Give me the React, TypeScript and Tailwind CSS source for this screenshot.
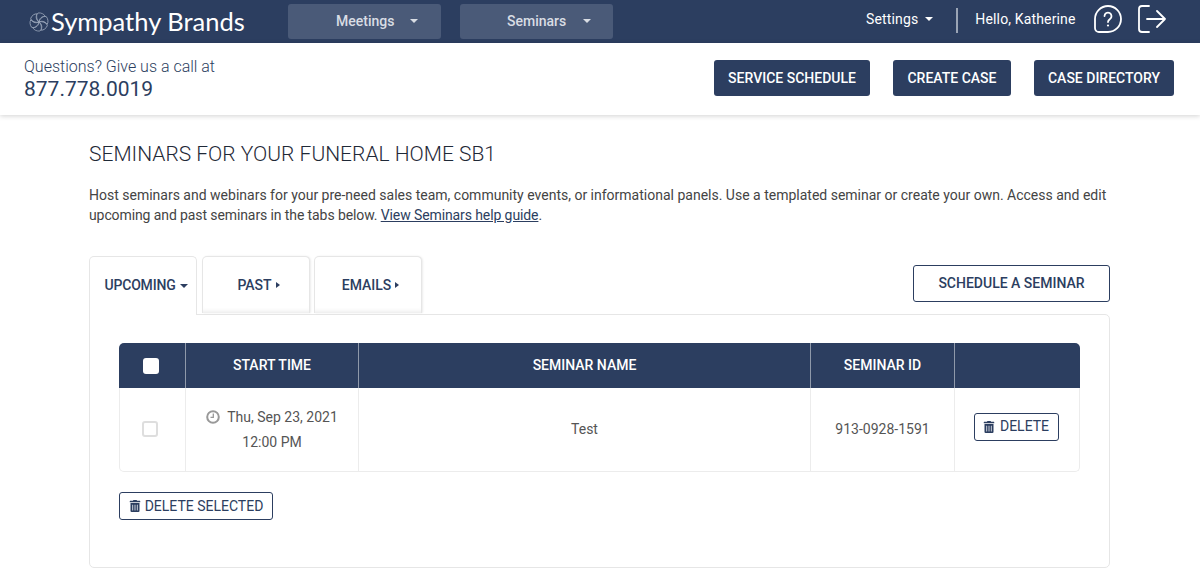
import React from "react";
import { FaTrashAlt } from "react-icons/fa";

function Caret({ right }: { right?: boolean }) {
  if (right) {
    return <span className="inline-block w-0 h-0 border-y-[3.5px] border-y-transparent border-l-[4px] border-l-current" />;
  }
  return <span className="inline-block w-0 h-0 border-x-[4px] border-x-transparent border-t-[4px] border-t-current" />;
}

function LogoMark() {
  const angles = [0, 60, 120, 180, 240, 300];
  return (
    <svg width="20" height="20" viewBox="0 0 20 20" fill="none" stroke="#9aa6ba" strokeWidth="0.8">
      {angles.map((a) => (
        <g key={a} transform={`rotate(${a} 10 10)`}>
          <path d="M10 10C7 8 6 4 9 1C12 .5 15 2 16 4C14 5 11 6 10 10Z" />
        </g>
      ))}
    </svg>
  );
}

function ClockIcon() {
  return (
    <svg width="14" height="14" viewBox="0 0 14 14" fill="none" stroke="#999" strokeWidth="2">
      <circle cx="7" cy="7" r="5.8" />
      <path d="M7.3 3.5V7.3H4.5" strokeWidth="1.3" />
    </svg>
  );
}

function App() {
  return (
    <div className="w-[1200px] h-[576px] overflow-hidden bg-white font-['Roboto',sans-serif] text-[#2c3e60]">
      <div className="h-[43px] bg-[#2c3e60] flex items-center text-white">
        <div className="ml-[29px] w-[259px] flex items-center">
          <LogoMark />
          <span className="font-['Lato',sans-serif] text-[25.5px] leading-none ml-[2px] whitespace-nowrap">Sympathy Brands</span>
        </div>
        <div className="w-[153px] h-[35px] -mt-[1px] rounded-[3px] bg-[#4a5a78] flex items-center pl-[48px] text-[14px] font-medium text-[#d9dde4]">
          Meetings
          <span className="ml-[16px] flex"><Caret /></span>
        </div>
        <div className="w-[153px] h-[35px] -mt-[1px] ml-[19px] rounded-[3px] bg-[#4a5a78] flex items-center pl-[47px] text-[14px] font-medium text-[#d9dde4]">
          Seminars
          <span className="ml-[17px] flex"><Caret /></span>
        </div>
        <div className="ml-[253px] -mt-[5px] flex items-center text-[14px] tracking-[0.15px]">
          Settings
          <span className="ml-[7px] flex"><Caret /></span>
        </div>
        <div className="ml-[23px] -mt-[3px] w-[2px] h-[25px] bg-[#9aa4b5]" />
        <div className="ml-[17px] -mt-[5px] text-[14px] tracking-[0.15px] whitespace-nowrap">Hello, Katherine</div>
        <svg className="ml-[18px] -mt-[5px]" width="28" height="28" viewBox="0 0 28 28" fill="none" stroke="white" strokeWidth="1.8">
          <path d="M14 1a13 13 0 0 1 0 26H5a4 4 0 0 1-4-4V14A13 13 0 0 1 14 1Z" />
          <path d="M10.5 11a3.5 3.5 0 1 1 5.5 3c-1.3.9-2 1.5-2 3" strokeLinecap="round" />
          <circle cx="14" cy="20.5" r="1.1" fill="white" stroke="none" />
        </svg>
        <svg className="ml-[16px] -mt-[5px]" width="28" height="28" viewBox="0 0 28 28" fill="none" stroke="white" strokeWidth="1.8" strokeLinecap="round" strokeLinejoin="round">
          <path d="M11 1H4a3 3 0 0 0-3 3v20a3 3 0 0 0 3 3h7" />
          <path d="M9 14h18M19 6l8 8-8 8" />
        </svg>
      </div>

      <div className="h-[72px] bg-white shadow-[0_1px_5px_rgba(0,0,0,0.18)] flex items-center relative">
        <div className="ml-[24px]">
          <p className="text-[16px] font-light leading-[19px] mt-[1px]">Questions? Give us a call at</p>
          <p className="text-[21px] leading-[25px] mt-[1px]">877.778.0019</p>
        </div>
        <div className="ml-auto mr-[26px] -mt-[2px] flex gap-[23px] text-white text-[14px] font-medium">
          <div className="h-[36px] w-[156px] rounded-[3px] bg-[#2c3e60] flex items-center justify-center">SERVICE SCHEDULE</div>
          <div className="h-[36px] w-[118px] rounded-[3px] bg-[#2c3e60] flex items-center justify-center">CREATE CASE</div>
          <div className="h-[36px] w-[140px] rounded-[3px] bg-[#2c3e60] flex items-center justify-center">CASE DIRECTORY</div>
        </div>
      </div>

      <div className="pl-[89px] w-[1110px]">
        <h1 className="text-[21px] font-light leading-[24px] mt-[27px] text-[#1f2937]">SEMINARS FOR YOUR FUNERAL HOME SB1</h1>
        <p className="text-[14px] leading-[20px] mt-[19px] text-[#444] whitespace-nowrap">
          Host seminars and webinars for your pre-need sales team, community events, or informational panels. Use a templated seminar or create your own. Access and edit
          <br />
          <span className="tracking-[-0.1px]">upcoming and past seminars in the tabs below. <span className="underline text-[#2c3e60]">View Seminars help guide</span>.</span>
        </p>

        <div className="mt-[31px] flex items-start h-[58px]">
          <div className="relative z-10 w-[108px] h-[59px] rounded-t-[5px] border border-b-0 border-[#e6e6e6] bg-white flex items-center justify-center gap-[5px] text-[14px] font-medium pb-[1px] pl-[7px]">
            <span className="tracking-[-0.2px]">UPCOMING</span> <Caret />
          </div>
          <div className="ml-[5px] w-[108px] h-[57px] rounded-t-[5px] border border-b-0 border-[#e6e6e6] bg-white shadow-[inset_0_-5px_5px_-4px_rgba(0,0,0,0.1),1px_0_2px_rgba(0,0,0,0.08)] flex items-center justify-center gap-[4px] text-[14px] font-medium pl-[5px]">
            PAST <Caret right />
          </div>
          <div className="ml-[4px] w-[108px] h-[57px] rounded-t-[5px] border border-b-0 border-[#e6e6e6] bg-white shadow-[inset_0_-5px_5px_-4px_rgba(0,0,0,0.1),1px_0_2px_rgba(0,0,0,0.08)] flex items-center justify-center gap-[4px] text-[14px] font-medium pl-[5px]">
            EMAILS <Caret right />
          </div>
          <div className="ml-auto mt-[9px] w-[197px] h-[37px] rounded-[3px] border border-[#2c3e60] flex items-center justify-center text-[14px] font-medium">
            SCHEDULE A SEMINAR
          </div>
        </div>

        <div className="w-[1021px] h-[254px] rounded-b-[5px] rounded-tr-[5px] border border-[#e6e6e6] pt-[28px] pl-[29px]">
          <div className="w-[961px]">
            <div className="h-[45px] bg-[#2c3e60] rounded-t-[5px] grid grid-cols-[67px_173px_452px_144px_125px] text-white text-[14px] font-medium">
              <div className="flex items-center justify-center border-r border-[#8f99aa] pr-[2px]">
                <span className="w-[16px] h-[16px] rounded-[3px] bg-white" />
              </div>
              <div className="flex items-center justify-center border-r border-[#8f99aa]">START TIME</div>
              <div className="flex items-center justify-center border-r border-[#8f99aa]">SEMINAR NAME</div>
              <div className="flex items-center justify-center border-r border-[#8f99aa]">SEMINAR ID</div>
              <div />
            </div>
            <div className="h-[84px] rounded-b-[5px] border border-t-0 border-[#ececec] grid grid-cols-[66px_173px_452px_144px_124px] text-[14px] text-[#555]">
              <div className="flex items-center justify-center border-r border-[#ececec] pr-[6px]">
                <span className="w-[16px] h-[16px] rounded-[3px] border-2 border-[#dedede] -mt-[2px]" />
              </div>
              <div className="flex flex-col items-center justify-center border-r border-[#ececec] leading-[25px]">
                <div className="flex items-center gap-[7px]">
                  <ClockIcon />
                  Thu, Sep 23, 2021
                </div>
                <div>12:00 PM</div>
              </div>
              <div className="flex items-center justify-center border-r border-[#ececec]">Test</div>
              <div className="flex items-center justify-center border-r border-[#ececec]">913-0928-1591</div>
              <div className="flex items-center justify-center pr-[2px]">
                <div className="w-[85px] h-[28px] -mt-[6px] rounded-[3px] border border-[#2c3e60] flex items-center justify-center gap-[5px] text-[#2c3e60]">
                  <FaTrashAlt className="text-[12px]" />
                  DELETE
                </div>
              </div>
            </div>
            <div className="mt-[20px] w-[154px] h-[28px] rounded-[3px] border border-[#2c3e60] flex items-center justify-center gap-[4px] text-[14px]">
              <FaTrashAlt className="text-[12px]" />
              DELETE SELECTED
            </div>
          </div>
        </div>
      </div>
    </div>
  );
}

export default App;
